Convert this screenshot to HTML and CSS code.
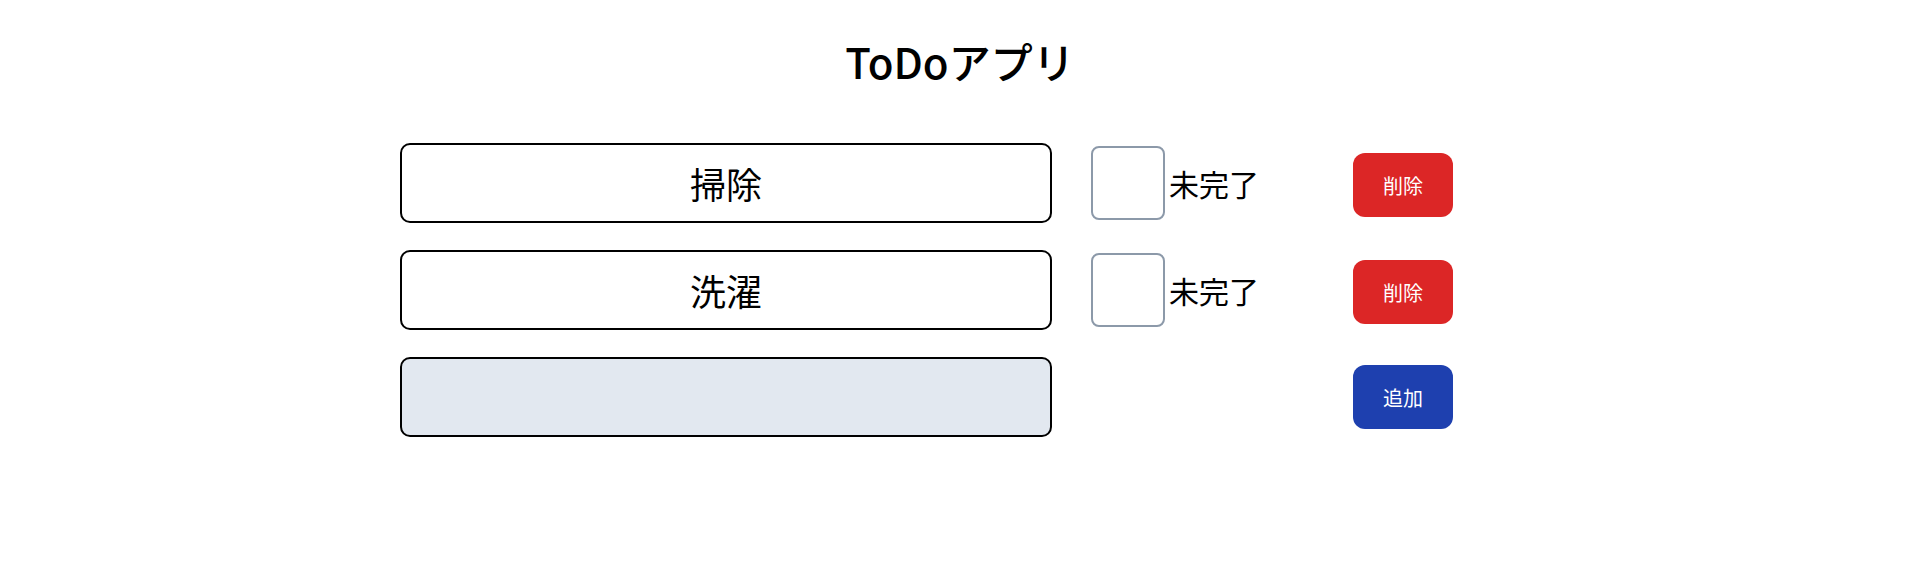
FILE: index.html
```html
<!DOCTYPE html>
<html lang="ja">
<head>
<meta charset="utf-8">
<title>ToDoアプリ</title>
<link rel="stylesheet" href="styles.css">
</head>
<body>
<main class="app">
  <h1 class="title">ToDoアプリ</h1>
  <div class="list">
    <div class="row">
      <input class="task" type="text" value="掃除">
      <label class="status"><input class="check" type="checkbox"><span>未完了</span></label>
      <button class="btn btn-delete">削除</button>
    </div>
    <div class="row">
      <input class="task" type="text" value="洗濯">
      <label class="status"><input class="check" type="checkbox"><span>未完了</span></label>
      <button class="btn btn-delete">削除</button>
    </div>
    <div class="row">
      <input class="task task-new" type="text" value="">
      <div class="status"></div>
      <button class="btn btn-add">追加</button>
    </div>
  </div>
</main>
</body>
</html>
```

FILE: styles.css
```css
* { box-sizing: border-box; }
body {
  margin: 0;
  background: #ffffff;
  color: #000000;
  font-family: "Noto Sans CJK JP", "Noto Sans", sans-serif;
}
.app {
  width: 1120px;
  margin: 0 auto;
}
.title {
  margin: 38px 0 0;
  font-size: 42px;
  line-height: 46px;
  font-weight: 500;
  text-align: center;
}
.list {
  margin-top: 59px;
  display: flex;
  flex-direction: column;
  gap: 27px;
}
.row {
  display: grid;
  grid-template-columns: 652px 223px 100px;
  column-gap: 39px;
  align-items: center;
}
.task {
  height: 80px;
  width: 100%;
  border: 2px solid #000000;
  border-radius: 10px;
  background: #ffffff;
  font-family: inherit;
  font-size: 36px;
  text-align: center;
  color: #000000;
  padding: 0 12px;
  outline: none;
}
.task-new { background: #e2e8f0; }
.status {
  display: flex;
  align-items: center;
  gap: 4px;
  font-size: 30px;
  line-height: 1;
}
.check {
  appearance: none;
  -webkit-appearance: none;
  margin: 0;
  width: 74px;
  height: 74px;
  border: 2px solid #8c99a9;
  border-radius: 8px;
  background: #ffffff;
}
.btn {
  height: 64px;
  width: 100px;
  border: none;
  border-radius: 12px;
  color: #ffffff;
  font-family: inherit;
  font-size: 20px;
  cursor: pointer;
}
.btn-delete {
  background: #dc2626;
  margin-top: 4px;
}
.btn-add { background: #1e40af; }
```
